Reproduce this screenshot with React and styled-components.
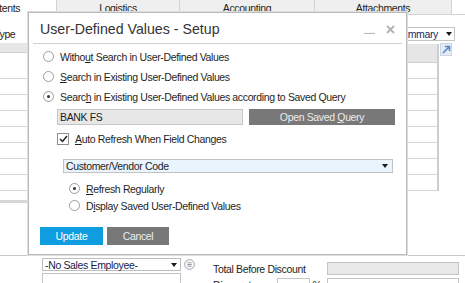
import styled, { createGlobalStyle } from 'styled-components';

const GlobalStyle = createGlobalStyle`
  html, body { margin: 0; padding: 0; background: #fff; }
  body {
    font-family: "Liberation Sans", Arial, sans-serif;
    font-size: 10.5px;
    letter-spacing: -0.35px;
    color: #1e1e1e;
  }
  #root { width: 465px; height: 283px; }
`;

const Screen = styled.div`
  position: relative;
  width: 465px;
  height: 283px;
  overflow: hidden;
  background: #fff;
  display: flex;
  flex-direction: column;
`;

/* ---------- background form ---------- */

const TabBar = styled.div`
  display: flex;
  height: 15px;
  flex: none;
`;

const Tab = styled.div`
  width: ${(p) => p.$w}px;
  flex: none;
  box-sizing: border-box;
  background: ${(p) => (p.$active ? '#fff' : '#efefef')};
  border-right: 1px solid #d2d2d2;
  border-bottom: 1px solid ${(p) => (p.$active ? 'transparent' : '#d2d2d2')};
  display: flex;
  align-items: center;
  justify-content: ${(p) => (p.$active ? 'flex-start' : 'center')};
  overflow: hidden;
  white-space: nowrap;
  padding-top: 1px;
`;

const TabFill = styled.div`
  flex: 1;
  border-bottom: 1px solid #d2d2d2;
`;

const ClippedLabel = styled.span`
  margin-left: ${(p) => p.$shift}px;
`;

const HeaderRow = styled.div`
  height: 28px;
  flex: none;
  box-sizing: border-box;
  padding: 12px 10px 2px 0;
  display: flex;
  justify-content: space-between;
  align-items: center;
`;

const SummarySelect = styled.div`
  width: 70px;
  height: 14px;
  box-sizing: border-box;
  border: 1px solid #c4c4c4;
  display: flex;
  align-items: center;
  justify-content: flex-end;
  gap: 8px;
  padding-right: 2px;
  color: #1b2a66;
`;

const Arrow = styled.span`
  width: 0;
  height: 0;
  border-left: 3.5px solid transparent;
  border-right: 3.5px solid transparent;
  border-top: 4px solid #1a1a1a;
  flex: none;
`;

const Matrix = styled.div`
  height: 213px;
  flex: none;
  box-sizing: border-box;
  border-bottom: 1px solid #c8c8c8;
  display: flex;
`;

const LeftGrid = styled.div`
  width: 407px;
  flex: none;
  display: flex;
  flex-direction: column;
`;

const GridHead = styled.div`
  height: ${(p) => p.$h}px;
  flex: none;
  background: #e6e6e6;
  border-bottom: 1px solid #d0d0d0;
`;

const GridRow = styled.div`
  height: ${(p) => p.$h || 15}px;
  flex: none;
  border-bottom: 1px solid #d6d6d6;
`;

const GridBar = styled.div`
  height: 3px;
  margin-top: 9px;
  background: #d6d6d6;
`;

const SideCol = styled.div`
  width: 32px;
  flex: none;
  margin-top: 1px;
  align-self: flex-start;
  box-sizing: border-box;
  border-left: 1px solid #d0d0d0;
  border-right: 2px solid #cdcdcd;
  display: flex;
  flex-direction: column;
`;

const LinkIcon = styled.svg`
  width: 12px;
  height: 13px;
  margin-left: 1px;
  flex: none;
`;

const Footer = styled.div`
  display: flex;
  padding: 2px 0 0 42px;
`;

const FooterLeft = styled.div`
  display: flex;
  flex-direction: column;
  gap: 2px;
`;

const SelectLine = styled.div`
  display: flex;
  align-items: center;
  gap: 3px;
`;

const FormSelect = styled.div`
  width: 139px;
  height: 13px;
  box-sizing: border-box;
  border: 1px solid #bdbdbd;
  padding: 0 3px 0 2px;
  display: flex;
  align-items: center;
  justify-content: space-between;
  color: #15224f;
`;

const FormInput = styled.div`
  width: ${(p) => p.$w}px;
  height: 13px;
  box-sizing: border-box;
  border: 1px solid #c4c4c4;
  background: ${(p) => (p.$gray ? '#e8e8e8' : '#fff')};
  flex: none;
`;

const FooterRight = styled.div`
  margin-left: 18px;
  display: flex;
  flex-direction: column;
  gap: 3px;
  padding-top: 4px;
`;

const FieldLine = styled.div`
  display: flex;
  align-items: center;
  height: 13px;
`;

const FieldLabel = styled.span`
  width: ${(p) => p.$w}px;
  flex: none;
  white-space: nowrap;
  line-height: 13px;
  padding-top: 2px;
`;

/* ---------- dialog ---------- */

const Dialog = styled.div`
  position: absolute;
  left: 28px;
  top: 12px;
  width: 379px;
  height: 243px;
  box-sizing: border-box;
  background: #fff;
  border: 1px solid #bababa;
  box-shadow: 0 0 0 1px #dedede;
  display: flex;
  flex-direction: column;
`;

const TitleBar = styled.div`
  height: 28px;
  margin: 0 4px;
  padding: 2px 7px 0 7px;
  border-bottom: 1px solid #cfcfcf;
  display: flex;
  align-items: center;
  justify-content: space-between;
`;

const Title = styled.h1`
  margin: 0;
  font-family: "Liberation Sans", Arial, sans-serif;
  font-weight: 400;
  font-size: 14.2px;
  letter-spacing: 0;
  color: #333;
`;

const WindowControls = styled.div`
  display: flex;
  align-items: center;
  gap: 11px;
`;

const Body = styled.div`
  display: flex;
  flex-direction: column;
  padding-top: 3px;
`;

const OptionRow = styled.div`
  display: flex;
  align-items: center;
  gap: 6px;
  height: ${(p) => p.$h || 19}px;
  padding-left: ${(p) => p.$indent}px;
  margin-top: ${(p) => p.$mt || 0}px;
  white-space: nowrap;
`;

const RadioCircle = styled.span`
  width: 11px;
  height: 11px;
  box-sizing: border-box;
  border: 1px solid #9c9c9c;
  border-radius: 50%;
  background: #fff;
  flex: none;
  display: flex;
  align-items: center;
  justify-content: center;

  &::after {
    content: '';
    width: 3px;
    height: 3px;
    border-radius: 50%;
    background: ${(p) => (p.$on ? '#333' : 'transparent')};
  }
`;

const CheckBox = styled.span`
  width: 12px;
  height: 12px;
  box-sizing: border-box;
  border: 1px solid #8f8f8f;
  background: #fff;
  flex: none;
  display: flex;
  align-items: center;
  justify-content: center;
`;

const Key = styled.span`
  text-decoration: underline;
  text-underline-offset: 1px;
`;

const QueryField = styled.div`
  width: 186px;
  height: 16px;
  box-sizing: border-box;
  border: 1px solid #c6c6c6;
  background: #e7e7e7;
  padding-left: 2px;
  display: flex;
  align-items: center;
`;

const FlatButton = styled.button`
  width: ${(p) => p.$w}px;
  height: ${(p) => p.$h}px;
  border: none;
  padding: 0;
  margin: 0;
  font: inherit;
  letter-spacing: inherit;
  color: ${(p) => (p.$primary ? '#fff' : '#ececec')};
  background: ${(p) => (p.$primary ? '#109ddf' : '#787878')};
  flex: none;
`;

const DropDown = styled.div`
  width: 330px;
  height: 14px;
  box-sizing: border-box;
  border: 1px solid #c2c2c2;
  background: #e9f4fd;
  padding: 0 4px 0 2px;
  display: flex;
  align-items: center;
  justify-content: space-between;
`;

const ButtonRow = styled.div`
  display: flex;
  gap: 4px;
  padding-left: 11px;
  margin-top: 13px;
`;

function Radio({ on, children, indent, mt, h }) {
  return (
    <OptionRow $indent={indent} $mt={mt} $h={h}>
      <RadioCircle $on={on} />
      <span>{children}</span>
    </OptionRow>
  );
}

export default function App() {
  const sideRows = Array.from({ length: 8 });
  const leftRows = Array.from({ length: 7 });

  return (
    <>
      <GlobalStyle />
      <Screen>
        <TabBar>
          <Tab $w={57} $active>
            <ClippedLabel $shift={-19}>Contents</ClippedLabel>
          </Tab>
          <Tab $w={123}>Logistics</Tab>
          <Tab $w={135}>Accounting</Tab>
          <Tab $w={137}>Attachments</Tab>
          <TabFill />
        </TabBar>

        <HeaderRow>
          <ClippedLabel $shift={-6}>Type</ClippedLabel>
          <SummarySelect>
            <span>Summary</span>
            <Arrow />
          </SummarySelect>
        </HeaderRow>

        <Matrix>
          <LeftGrid>
            <GridHead $h={9} />
            <GridRow $h={25} />
            {leftRows.map((_, i) => (
              <GridRow key={i} />
            ))}
            <GridBar />
          </LeftGrid>
          <SideCol>
            <GridHead $h={18} />
            {sideRows.map((_, i) => (
              <GridRow key={i} />
            ))}
          </SideCol>
          <LinkIcon viewBox="0 0 12 13">
            <rect x="0.5" y="0.5" width="11" height="12" fill="#e3ebf6" stroke="#c9d6ea" />
            <path d="M3 10 L9.5 3.5 M5 3.5 H9.5 V8" fill="none" stroke="#5b86c8" strokeWidth="1.6" />
          </LinkIcon>
        </Matrix>

        <Footer>
          <FooterLeft>
            <SelectLine>
              <FormSelect>
                <span>-No Sales Employee-</span>
                <Arrow />
              </FormSelect>
              <svg width="11" height="11" viewBox="0 0 11 11">
                <circle cx="5.5" cy="5.5" r="4.8" fill="#fff" stroke="#9a9aa8" />
                <path d="M3.3 3.8 H7.7 M3.3 5.5 H7.7 M3.3 7.2 H7.7" stroke="#8a8aa0" strokeWidth="0.9" />
              </svg>
            </SelectLine>
            <FormInput $w={139} />
          </FooterLeft>
          <FooterRight>
            <FieldLine>
              <FieldLabel $w={114}>Total Before Discount</FieldLabel>
              <FormInput $w={132} $gray />
            </FieldLine>
            <FieldLine>
              <FieldLabel $w={64}>Discount</FieldLabel>
              <FormInput $w={33} />
              <FieldLabel $w={17}>&nbsp;%</FieldLabel>
              <FormInput $w={132} />
            </FieldLine>
          </FooterRight>
        </Footer>

        <Dialog>
          <TitleBar>
            <Title>User-Defined Values - Setup</Title>
            <WindowControls>
              <svg width="11" height="10" viewBox="0 0 11 10">
                <path d="M0 9.5 H11" stroke="#b8b8b8" strokeWidth="1.2" />
              </svg>
              <svg width="9" height="9" viewBox="0 0 9 9">
                <path d="M1 1 L8 8 M8 1 L1 8" stroke="#b3b3b3" strokeWidth="1.8" />
              </svg>
            </WindowControls>
          </TitleBar>

          <Body>
            <Radio indent={14}>
              Witho<Key>u</Key>t Search in User-Defined Values
            </Radio>
            <Radio indent={14} mt={1}>
              <Key>S</Key>earch in Existing User-Defined Values
            </Radio>
            <Radio indent={14} mt={1} on>
              Searc<Key>h</Key> in Existing User-Defined Values according to Saved Query
            </Radio>

            <OptionRow $indent={28} $mt={3} $h={16}>
              <QueryField>BANK FS</QueryField>
              <FlatButton $w={146} $h={16}>
                Open Saved <Key>Q</Key>uery
              </FlatButton>
            </OptionRow>

            <OptionRow $indent={28} $mt={6} $h={16}>
              <CheckBox>
                <svg width="9" height="8" viewBox="0 0 9 8">
                  <path d="M1 4 L3.5 6.5 L8 1" fill="none" stroke="#222" strokeWidth="1.5" />
                </svg>
              </CheckBox>
              <span>
                <Key>A</Key>uto Refresh When Field Changes
              </span>
            </OptionRow>

            <OptionRow $indent={34} $mt={12} $h={14}>
              <DropDown>
                <span>Customer/Vendor Code</span>
                <Arrow />
              </DropDown>
            </OptionRow>

            <Radio indent={40} mt={7} h={17} on>
              <Key>R</Key>efresh Regularly
            </Radio>
            <Radio indent={40} h={17}>
              D<Key>i</Key>splay Saved User-Defined Values
            </Radio>

            <ButtonRow>
              <FlatButton $w={63} $h={18} $primary>
                Update
              </FlatButton>
              <FlatButton $w={62} $h={18}>
                Cancel
              </FlatButton>
            </ButtonRow>
          </Body>
        </Dialog>
      </Screen>
    </>
  );
}
